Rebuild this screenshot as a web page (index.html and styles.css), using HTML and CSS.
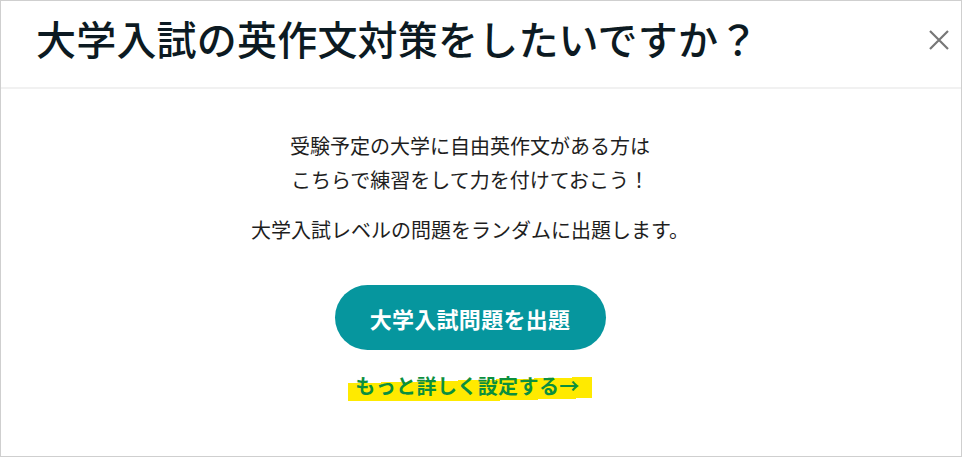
FILE: index.html
```html
<!DOCTYPE html>
<html lang="ja">
<head>
  <meta charset="UTF-8"/>
  <meta name="viewport" content="width=device-width, initial-scale=1.0"/>
  <title>大学入試の英作文対策</title>
  <link rel="stylesheet" href="styles.css">
</head>
<body>
  <div class="modal">
    <div class="modal-header">
      <h1>大学入試の英作文対策をしたいですか？</h1>
      <button class="close" aria-label="閉じる">
        <svg width="22" height="22" viewBox="0 0 22 22"><path d="M2 2L20 20M20 2L2 20" stroke="#777" stroke-width="2.2" fill="none"/></svg>
      </button>
    </div>
    <div class="modal-body">
      <p class="lead">受験予定の大学に自由英作文がある方は<br>こちらで練習をして力を付けておこう！</p>
      <p class="note">大学入試レベルの問題をランダムに出題します。</p>
      <button class="start">大学入試問題を出題</button>
      <a class="more" href="#"><span>もっと詳しく設定する→</span></a>
    </div>
  </div>
</body>
</html>
```

FILE: styles.css
```css
body { margin: 0; font-family: "Noto Sans CJK JP", "Noto Sans", sans-serif; background: #fff; }
.modal { height: 457px; box-sizing: border-box; border: 1px solid #cfcfcf; }
.modal-header { height: 88px; box-sizing: border-box; border-bottom: 2px solid #f1f1f1; display: flex; justify-content: space-between; align-items: flex-start; padding: 13px 11px 0 35px; }
.modal-header h1 { margin: 0; font-size: 40px; line-height: 48px; font-weight: 500; color: #0c1a22; letter-spacing: 0.2px; }
.close { background: none; border: none; padding: 0; margin-top: 15px; cursor: pointer; }
.modal-body { display: flex; flex-direction: column; align-items: center; padding: 40px 22px 0 0; color: #1e1e1e; text-align: center; }
.lead { margin: 0; font-size: 20px; line-height: 34px; }
.note { margin: 16px 0 0; font-size: 20px; line-height: 34px; }
.start { margin-top: 38px; width: 271px; height: 65px; border: none; border-radius: 33px; background: #06969e; color: #fff; font-family: inherit; font-size: 22px; font-weight: 700; letter-spacing: 0.3px; cursor: pointer; }
.more { margin-top: 21px; text-decoration: none; font-size: 20px; font-weight: 700; line-height: 30px; color: #0b8f3e; letter-spacing: 0.4px; }
.more span { display: inline-block; padding: 0 12px 0 7px; background: linear-gradient(178.5deg, transparent 34%, #ffea00 34%, #ffea00 92%, transparent 92%); }
```
